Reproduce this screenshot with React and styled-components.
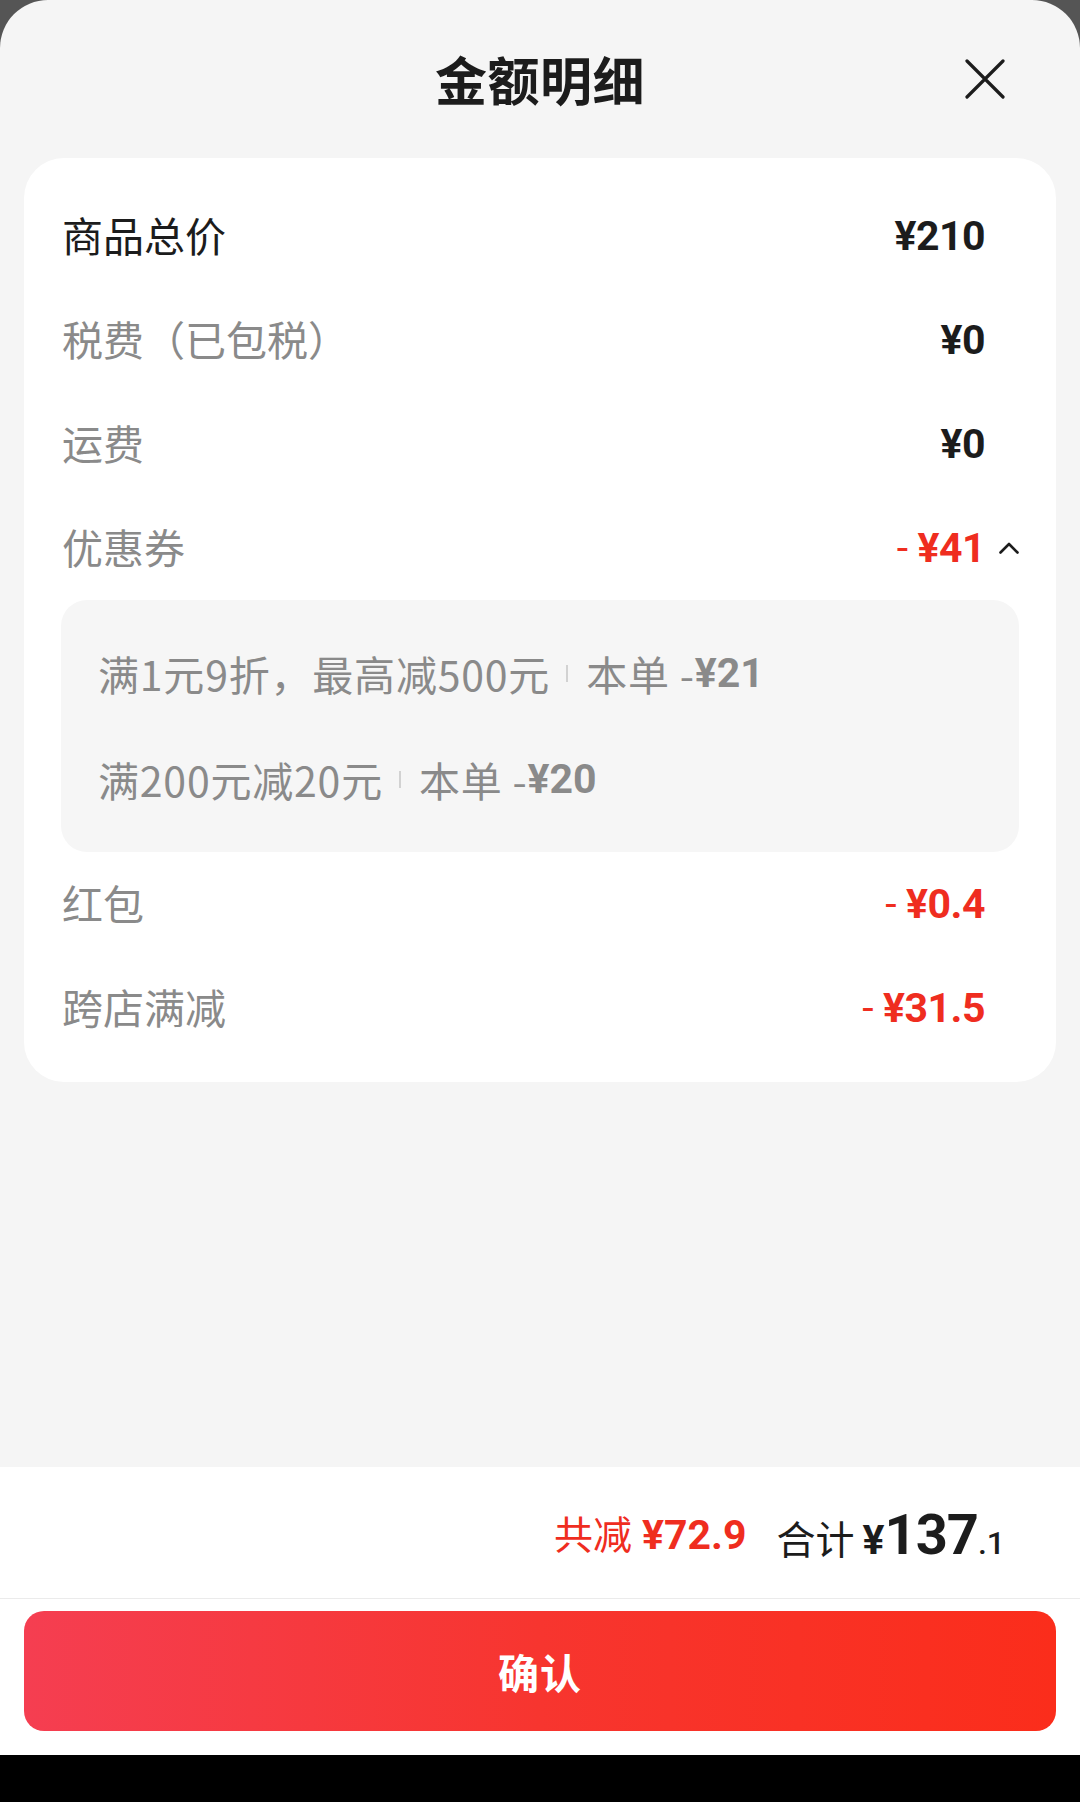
import React from "react";
import styled, { createGlobalStyle } from "styled-components";

const Global = createGlobalStyle`
  html, body { margin: 0; padding: 0; }
  body {
    background: #555555;
    font-family: "Noto Sans CJK SC", "Noto Sans", sans-serif;
  }
  * { box-sizing: border-box; }
`;

const RED = "#ef2d1f";
const GRAY = "#8a8a8a";
const DARK = "#1c1c1c";
const NUM = `Roboto, "Noto Sans CJK SC", sans-serif`;

const Screen = styled.div`
  width: 1080px;
  height: 1802px;
  display: flex;
  flex-direction: column;
  background: #555555;
`;

const Sheet = styled.div`
  flex: 1;
  display: flex;
  flex-direction: column;
  background: #f5f5f5;
  border-radius: 48px 48px 0 0;
  overflow: hidden;
`;

const HomeBar = styled.div`
  height: 47px;
  background: #000;
`;

const Header = styled.div`
  height: 158px;
  display: grid;
  grid-template-columns: 1fr auto 1fr;
  align-items: center;
  padding: 0 75px 0 75px;
`;

const Title = styled.h1`
  grid-column: 2;
  margin: 0;
  font-size: 52px;
  font-weight: 700;
  color: ${DARK};
  line-height: 1;
  letter-spacing: 0.5px;
`;

const CloseBtn = styled.button`
  grid-column: 3;
  justify-self: end;
  width: 40px;
  height: 40px;
  padding: 0;
  border: 0;
  background: transparent;
  display: flex;
  align-items: center;
  justify-content: center;
`;

const Card = styled.div`
  margin: 0 24px;
  background: #fff;
  border-radius: 40px;
  padding: 26px 37px 22px 37px;
  display: flex;
  flex-direction: column;
`;

const Row = styled.div`
  height: 104px;
  display: flex;
  align-items: center;
  justify-content: space-between;
  padding-left: 1px;
`;

const Label = styled.span`
  font-size: 41px;
  color: ${(p) => (p.$strong ? DARK : GRAY)};
  line-height: 1;
  margin-top: -4px;
`;

const ValueGroup = styled.div`
  display: flex;
  align-items: center;
`;

const Value = styled.span`
  font-family: ${NUM};
  font-size: 41px;
  font-weight: 700;
  line-height: 1;
  color: ${(p) => (p.$red ? RED : DARK)};
  letter-spacing: -0.5px;
`;

const Minus = styled.span`
  font-weight: 400;
  margin-right: 10px;
`;

const CaretSlot = styled.span`
  width: 34px;
  height: 20px;
  display: flex;
  align-items: center;
  justify-content: flex-end;
`;

const CouponBox = styled.div`
  background: #f6f6f6;
  border-radius: 26px;
  padding: 20px 37px 20px 37px;
  display: flex;
  flex-direction: column;
`;

const CouponLine = styled.div`
  height: 106px;
  display: flex;
  align-items: center;
  font-size: 41px;
  color: ${GRAY};
  line-height: 1;
  white-space: nowrap;
  letter-spacing: 0.8px;
`;

const Sep = styled.span`
  width: 2px;
  height: 17px;
  background: #d2d2d2;
  margin: 0 18px 0 16px;
  align-self: center;
`;

const BoldNum = styled.span`
  font-family: ${NUM};
  font-weight: 700;
  letter-spacing: 0;
`;

const Spacer = styled.div`
  flex: 1;
`;

const Footer = styled.div`
  background: #fff;
  display: flex;
  flex-direction: column;
`;

const Summary = styled.div`
  height: 132px;
  display: flex;
  align-items: center;
  justify-content: flex-end;
  padding: 4px 75px 0 0;
  border-bottom: 1px solid #ebebeb;
`;

const Saved = styled.span`
  color: ${RED};
  font-size: 39px;
  line-height: 1;
  display: flex;
  align-items: baseline;
  margin-right: 30px;
`;

const SavedNum = styled.span`
  font-family: ${NUM};
  font-weight: 700;
  font-size: 41px;
  margin-left: 10px;
`;

const Total = styled.span`
  color: ${DARK};
  font-size: 39px;
  line-height: 1;
  display: flex;
  align-items: baseline;
`;

const Yen = styled.span`
  font-family: ${NUM};
  font-weight: 700;
  font-size: 41px;
  margin-left: 8px;
`;

const Big = styled.span`
  font-family: ${NUM};
  font-weight: 700;
  font-size: 56px;
  letter-spacing: -1px;
`;

const Small = styled.span`
  font-family: ${NUM};
  font-weight: 500;
  font-size: 32px;
`;

const ButtonWrap = styled.div`
  padding: 12px 24px 24px 24px;
`;

const ConfirmButton = styled.button`
  width: 100%;
  height: 120px;
  border: 0;
  border-radius: 20px;
  background: linear-gradient(90deg, #f53e51 0%, #f7352f 50%, #fb2d1b 100%);
  color: #fff;
  font-family: "Noto Sans CJK SC", sans-serif;
  font-size: 41px;
  font-weight: 700;
  letter-spacing: 1px;
`;

const rows = [
  { label: "商品总价", value: "¥210", strong: true },
  { label: "税费（已包税）", value: "¥0" },
  { label: "运费", value: "¥0" },
];

const coupons = [
  { text: "满1元9折，最高减500元", amount: "¥21" },
  { text: "满200元减20元", amount: "¥20" },
];

const tail = [
  { label: "红包", value: "¥0.4" },
  { label: "跨店满减", value: "¥31.5" },
];

function CloseIcon() {
  return (
    <svg width="40" height="40" viewBox="0 0 40 40">
      <path d="M2 2 L38 38 M38 2 L2 38" stroke="#1c1c1c" strokeWidth="3.2" strokeLinecap="round" />
    </svg>
  );
}

function CaretUp() {
  return (
    <svg width="20" height="12" viewBox="0 0 20 12">
      <polyline points="1.5,10.5 10,2 18.5,10.5" fill="none" stroke="#1c1c1c" strokeWidth="2.6" strokeLinecap="round" strokeLinejoin="round" />
    </svg>
  );
}

export default function App() {
  return (
    <>
      <Global />
      <Screen>
        <Sheet>
          <Header>
            <Title>金额明细</Title>
            <CloseBtn aria-label="关闭">
              <CloseIcon />
            </CloseBtn>
          </Header>
          <Card>
            {rows.map((r) => (
              <Row key={r.label}>
                <Label $strong={r.strong}>{r.label}</Label>
                <ValueGroup>
                  <Value>{r.value}</Value>
                  <CaretSlot />
                </ValueGroup>
              </Row>
            ))}
            <Row>
              <Label>优惠券</Label>
              <ValueGroup>
                <Value $red>
                  <Minus>-</Minus>¥41
                </Value>
                <CaretSlot>
                  <CaretUp />
                </CaretSlot>
              </ValueGroup>
            </Row>
            <CouponBox>
              {coupons.map((c) => (
                <CouponLine key={c.text}>
                  {c.text}
                  <Sep />
                  本单 -<BoldNum>{c.amount}</BoldNum>
                </CouponLine>
              ))}
            </CouponBox>
            {tail.map((r) => (
              <Row key={r.label}>
                <Label>{r.label}</Label>
                <ValueGroup>
                  <Value $red>
                    <Minus>-</Minus>
                    {r.value}
                  </Value>
                  <CaretSlot />
                </ValueGroup>
              </Row>
            ))}
          </Card>
          <Spacer />
          <Footer>
            <Summary>
              <Saved>
                共减<SavedNum>¥72.9</SavedNum>
              </Saved>
              <Total>
                合计<Yen>¥</Yen>
                <Big>137</Big>
                <Small>.1</Small>
              </Total>
            </Summary>
            <ButtonWrap>
              <ConfirmButton>确认</ConfirmButton>
            </ButtonWrap>
          </Footer>
        </Sheet>
        <HomeBar />
      </Screen>
    </>
  );
}
